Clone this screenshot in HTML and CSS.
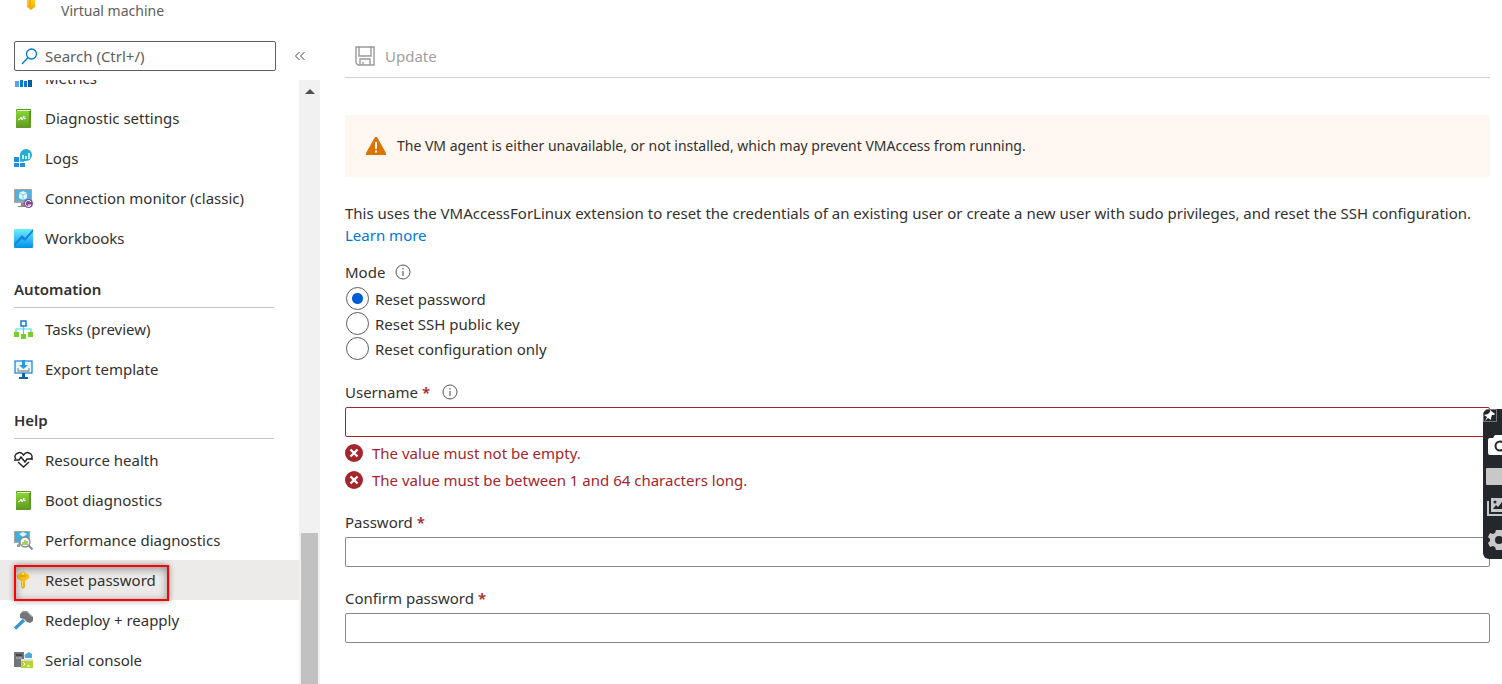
FILE: index.html
```
<!DOCTYPE html>
<html lang="en">
<head>
  <meta charset="UTF-8" />
  <meta name="viewport" content="width=device-width, initial-scale=1.0"/>
  <title>Reset password</title>
  <link rel="stylesheet" href="styles.css">
</head>
<body>

  <!-- Shared gradients and repeated icons -->
  <svg class="defs" width="0" height="0" aria-hidden="true">
    <defs>
      <linearGradient id="green" x1="0" y1="0" x2="0" y2="1"><stop offset="0" stop-color="#86d633"/><stop offset="1" stop-color="#5e9624"/></linearGradient>
      <linearGradient id="sky" x1="0" y1="0" x2="0" y2="1"><stop offset="0" stop-color="#6df0ff"/><stop offset="1" stop-color="#0091ea"/></linearGradient>
      <linearGradient id="gold" x1="0" y1="0" x2="0" y2="1"><stop offset="0" stop-color="#ffcf20"/><stop offset="1" stop-color="#f5a70c"/></linearGradient>
      <symbol id="book" viewBox="0 0 19 19">
        <rect x="2" y="0" width="15" height="19" rx="1" fill="#5e9624"/>
        <rect x="3" y="1" width="13" height="1" fill="#e4f5d0"/>
        <rect x="2" y="2" width="13" height="17" rx="1" fill="url(#green)"/>
        <path d="M4 11l2-1 1-2 1 3 2-4 0 3 2-1" fill="none" stroke="#fff" stroke-width="1"/>
      </symbol>
      <symbol id="key" viewBox="0 0 19 19">
        <path d="M9 0l6 4v3l-4 3v6l-2 2-2-2v-6L3 7V4z" fill="url(#gold)"/>
        <path d="M6 5h6" stroke="#e69500"/><circle cx="9" cy="2.500" r="1" fill="#fff"/>
        <path d="M8.500 10v6" stroke="#ffe067"/>
      </symbol>
      <symbol id="info" viewBox="0 0 16 16">
        <circle cx="8" cy="8" r="7" fill="none" stroke="#555"/>
        <path d="M8 7v5M8 4v1.500" stroke="#444"/>
      </symbol>
      <symbol id="error" viewBox="0 0 18 18">
        <circle cx="9" cy="9" r="9" fill="#a4262c"/>
        <path d="M5.500 5.500l7 7M12.500 5.500l-7 7" stroke="#fff" stroke-width="2.400"/>
      </symbol>
    </defs>
  </svg>

  <div class="page">
    <aside class="sidebar">
      <div class="resource">
        <svg class="icon" viewBox="0 0 19 19"><path d="M5 0h8v7l-4 3-4-3z" fill="url(#gold)"/><path d="M8 0v7" stroke="#e69500"/></svg>
        <span>Virtual machine</span>
      </div>

      <div class="search-row">
        <label class="search">
          <svg width="17" height="17" viewBox="0 0 17 17" fill="none" stroke="#0078d4" stroke-width="1.300"><circle cx="10.500" cy="6" r="5"/><path d="M7 9.500L1 16"/></svg>
          <input type="text" placeholder="Search (Ctrl+/)" aria-label="Search">
        </label>
        <button class="collapse" type="button" aria-label="Collapse menu">
          <svg width="12" height="12" viewBox="0 0 12 12" fill="none" stroke="#444"><path d="M5.500 2L1.500 6l4 4M10.500 2L6.500 6l4 4"/></svg>
        </button>
      </div>

      <div class="menu-area">
        <nav class="menu">
          <a href="#">
            <svg class="icon" viewBox="0 0 19 19"><path d="M1 12h4v6H1z" fill="#5ea0ef"/><path d="M6 8h3v10H6z" fill="#0078d4"/><path d="M10 12h3v6h-3z" fill="#0078d4"/><path d="M14 6h4v12h-4z" fill="#005ba1"/></svg>
            Metrics
          </a>
          <a href="#"><svg class="icon"><use href="#book"/></svg>Diagnostic settings</a>
          <a href="#">
            <svg class="icon" viewBox="0 0 19 19"><path d="M0 8h5v5H0zM0 14h5v4H0zM6 14h5v4H6z" fill="#258ddd"/><path d="M6 8h4v5H6z" fill="#57b8ef"/><path d="M6 12V6a6 6 0 1 1 6 6z" fill="#23aed0"/><path d="M9 6v4M12 7v3M15 4v6" stroke="#fff" stroke-width="1.500"/></svg>
            Logs
          </a>
          <a href="#">
            <svg class="icon" viewBox="0 0 19 19"><rect width="18" height="14" rx="1" fill="#a3a5a7"/><rect x="1" y="1" width="16" height="11" fill="#55b1d9"/><path d="M9 2l4 2v5l-4 2-4-2V4z" fill="#e4f6ff"/><path d="M5 4l4 2 4-2M9 6v5" stroke="#7ccbed" fill="none"/><path d="M7 14h4v3h3v1H4v-1h3z" fill="#888"/><circle cx="14.500" cy="14.500" r="4.500" fill="#804998"/><path d="M17 13a3 3 0 1 0 0 3h-3" stroke="#fff" fill="none"/></svg>
            Connection monitor (classic)
          </a>
          <a href="#">
            <svg class="icon" viewBox="0 0 19 19"><rect width="19" height="19" rx="1" fill="url(#sky)"/><path d="M0 15l8-9 3 3 8-9v3l-8 9-3-2-8 7z" fill="#1683e0"/></svg>
            Workbooks
          </a>

          <h2>Automation</h2>
          <a href="#">
            <svg class="icon" viewBox="0 0 19 19"><path d="M9.500 5v9M2 13V9h15v4" fill="none" stroke="#47d4ee" stroke-width="1.200"/><rect x="7" y="1" width="5" height="5" fill="#fff" stroke="#177bca" stroke-width="1.500"/><path d="M0 12h5v5H0zM7 14h5v5H7zM14 12h5v5h-5z" fill="#7acb28"/></svg>
            Tasks (preview)
          </a>
          <a href="#">
            <svg class="icon" viewBox="0 0 19 19"><rect x="1" y="1" width="17" height="12" fill="#e9f7ff" stroke="#2786d0" stroke-width="1.300"/><path d="M8 0h3v5h3L9.500 9 5 5h3z" fill="#289bdc"/><path d="M4 8v3h11V8" fill="none" stroke="#999" stroke-width="1.300"/><path d="M8 13h3v4h3v2H5v-2h3z" fill="#1261a6"/></svg>
            Export template
          </a>

          <h2>Help</h2>
          <a href="#">
            <svg class="icon" viewBox="0 0 19 19" fill="none" stroke="#222" stroke-width="1.400"><path d="M2 8C0 6 1 3 4 2c2-1 4 0 5.500 2C11 2 13 1 15 2c3 1 4 4 2 6M4 11l5.500 5L15 11"/><path d="M0 9h5l2-3 4 5 2-3h6"/></svg>
            Resource health
          </a>
          <a href="#"><svg class="icon"><use href="#book"/></svg>Boot diagnostics</a>
          <a href="#">
            <svg class="icon" viewBox="0 0 19 19"><rect width="16" height="12" fill="#a3a5a7"/><rect x="1" y="1" width="14" height="10" fill="#43add9"/><path d="M5 3l4-2 4 2-4 3z" fill="#e4f6ff"/><path d="M3 14l3-3v5H3z" fill="#999"/><path d="M14.500 14.500l4 4" stroke="#888" stroke-width="2"/><circle cx="11" cy="11" r="5" fill="#fff" stroke="#888" stroke-width="1.300"/><path d="M9 11v3M11 9v5M13 10v4" stroke="#6fba1b" stroke-width="1.300"/></svg>
            Performance diagnostics
          </a>
          <a href="#" class="active" aria-current="page"><svg class="icon"><use href="#key"/></svg>Reset password</a>
          <a href="#">
            <svg class="icon" viewBox="0 0 19 19"><path d="M1 17.500L10 9" stroke="#3797ce" stroke-width="3.200"/><path d="M6 3l3-3h4l6 6v4l-3 2-3-1-3-3-4-1z" fill="#737679"/><path d="M9 1h4l5 5" fill="none" stroke="#a0a2a4"/></svg>
            Redeploy + reapply
          </a>
          <a href="#">
            <svg class="icon" viewBox="0 0 19 19"><path d="M0 1h10v15H0z" fill="#737679"/><path d="M2 3h6v2H2z" fill="#444"/><path d="M2 7h6" stroke="#bbb"/><path d="M11 6a2 2 0 0 1 1-3l3-2 3 2v4h-7z" fill="#48add9"/><path d="M8 4l2 3" stroke="#804998"/><rect x="7" y="8" width="12" height="9" fill="#b8d432"/><path d="M7 8h12v2H7z" fill="#ddd"/><path d="M9 11l2 2-2 2M13 15h3" stroke="#fff" fill="none"/></svg>
            Serial console
          </a>
        </nav>
        <div class="scrollbar" aria-hidden="true">
          <div class="arrow"></div>
          <div class="thumb"></div>
        </div>
      </div>
    </aside>

    <main class="content">
      <div class="toolbar">
        <button type="button" disabled>
          <svg width="20" height="20" viewBox="0 0 20 20" fill="none" stroke="#999" stroke-width="1.400"><path d="M1 1h18v18H3l-2-2zM4 1v9h12V1M5 19v-6h10v6M8 19v-3"/></svg>
          Update
        </button>
      </div>

      <div class="banner">
        <svg width="20" height="18" viewBox="0 0 20 18"><path d="M9 0h2l9 16v2H0v-2z" fill="#db7500"/><path d="M10 5v7M10 13.500v2" stroke="#fff" stroke-width="2"/></svg>
        <span>The VM agent is either unavailable, or not installed, which may prevent VMAccess from running.</span>
      </div>

      <form>
        <p class="intro">This uses the VMAccessForLinux extension to reset the credentials of an existing user or create a new user with sudo privileges, and reset the SSH configuration. <a href="#">Learn more</a></p>

        <fieldset class="mode">
          <legend>Mode <svg class="info"><use href="#info"/></svg></legend>
          <label><input type="radio" name="mode" checked>Reset password</label>
          <label><input type="radio" name="mode">Reset SSH public key</label>
          <label><input type="radio" name="mode">Reset configuration only</label>
        </fieldset>

        <div class="form-group">
          <label for="username">Username <span class="required">*</span><svg class="info"><use href="#info"/></svg></label>
          <input type="text" id="username" class="invalid">
          <div class="error"><svg><use href="#error"/></svg>The value must not be empty.</div>
          <div class="error"><svg><use href="#error"/></svg>The value must be between 1 and 64 characters long.</div>
        </div>

        <div class="form-group">
          <label for="password">Password <span class="required">*</span></label>
          <input type="password" id="password">
        </div>

        <div class="form-group">
          <label for="confirm">Confirm password <span class="required">*</span></label>
          <input type="password" id="confirm">
        </div>
      </form>
    </main>
  </div>

  <!-- Capture tool docked to the right edge -->
  <div class="dock">
    <button type="button" class="pin" aria-label="Pin"><svg width="14" height="13" viewBox="0 0 14 13"><rect x=".5" y=".5" width="13" height="12" fill="none" stroke="#777"/><path d="M7 1l5 4-1 1-2 0-1 3 0 2-3-2-3 3 2-4-3-2 4-1 2-2z" fill="#fff"/></svg></button>
    <button type="button" aria-label="Camera"><svg width="14" height="20" viewBox="0 0 14 20"><path d="M0 5q0-2 2-2h3l2-3h7v20H2q-2 0-2-2z" fill="#fff"/><circle cx="12" cy="11" r="4.500" fill="none" stroke="#24272c" stroke-width="2"/></svg></button>
    <button type="button" aria-label="Video"><svg width="16" height="17" viewBox="0 0 16 17"><rect width="20" height="17" rx="1" fill="#c8c8c8"/></svg></button>
    <button type="button" aria-label="Gallery"><svg width="15" height="19" viewBox="0 0 15 19"><path d="M1 4v14h14" fill="none" stroke="#c8c8c8" stroke-width="2"/><path d="M4 1h11v14H4z" fill="#c8c8c8"/><circle cx="8" cy="5" r="1.500" fill="#24272c"/><path d="M6 12l3-4 2 2 4-5v7z" fill="#24272c"/></svg></button>
    <button type="button" aria-label="Settings"><svg width="14" height="22" viewBox="0 0 14 22"><path d="M8 1h6v20H8l-1-3-2-1-3 1-2-4 2-2v-2L0 8l2-4 3 1 2-1z" fill="#c8c8c8"/><circle cx="11" cy="11" r="4" fill="#24272c"/></svg></button>
  </div>

</body>
</html>
```
FILE: styles.css
```
*,
*::after {
  box-sizing: border-box;
}

body {
  margin: 0;
  font-family: "Noto Sans", "Open Sans", sans-serif;
  font-size: 15px;
  line-height: 22px;
  color: #323130;
  background: #fff;
}

button,
input {
  font: inherit;
}

button {
  border: none;
  padding: 0;
  background: none;
}

a {
  color: #0078d4;
  text-decoration: none;
}

.defs {
  position: absolute;
}

.page {
  display: flex;
  height: 100vh;
  overflow: hidden;
}

/* Sidebar */
.sidebar {
  display: flex;
  flex-direction: column;
  flex: 0 0 320px;
}

.resource {
  display: flex;
  gap: 20px;
  padding-left: 22px;
  height: 41px;
  font-size: 14px;
  color: #605e5c;
}

.search-row {
  display: flex;
  align-items: center;
  gap: 18px;
  padding-left: 14px;
  margin-bottom: 9px;
}

.search {
  display: flex;
  align-items: center;
  gap: 7px;
  width: 262px;
  height: 30px;
  padding-left: 6px;
  border: 1px solid #605e5c;
  border-radius: 2px;
}

.search input {
  flex: 1;
  min-width: 0;
  padding: 0;
  border: none;
  outline: none;
}

.search input::placeholder {
  color: #605e5c;
}

.collapse {
  display: flex;
}

.menu-area {
  display: flex;
  flex: 1;
  min-height: 0;
}

/* list is scrolled to its end */
.menu {
  display: flex;
  flex-direction: column;
  justify-content: flex-end;
  flex: 1;
  padding-bottom: 4px;
  overflow: hidden;
}

.menu a {
  display: flex;
  align-items: center;
  flex: 0 0 40px;
  gap: 12px;
  padding-left: 14px;
  color: #323130;
}

.icon {
  width: 19px;
  height: 19px;
}

.menu h2 {
  flex: 0 0 50px;
  margin: 0 25px 1px 14px;
  padding-top: 20px;
  border-bottom: 1px solid #c8c6c4;
  font-size: 15px;
  font-weight: 600;
}

.menu .active {
  position: relative;
  background: #edebe9;
}

/* red highlight frame */
.menu .active::after {
  content: "";
  position: absolute;
  left: 14px;
  top: 5px;
  width: 155px;
  height: 36px;
  border: 2px solid #f00;
  box-shadow: 0 0 6px rgba(0,0,0,0.4), inset 0 2px 8px rgba(0,0,0,0.4);
  z-index: 1;
}

.scrollbar {
  display: flex;
  flex-direction: column;
  justify-content: space-between;
  align-items: center;
  width: 21px;
  background: #f1f1f1;
}

.arrow {
  margin-top: 9px;
  border: 5px solid transparent;
  border-top: none;
  border-bottom-color: #505050;
}

.thumb {
  width: 17px;
  height: 25%;
  background: #c1c1c1;
}

/* Content */
.content {
  flex: 1;
  min-width: 0;
  padding: 34px 12px 0 25px;
}

.toolbar {
  height: 44px;
  padding-left: 10px;
  border-bottom: 1px solid #d2d0ce;
}

.toolbar button {
  display: flex;
  align-items: center;
  gap: 10px;
  height: 43px;
  color: #a19f9d;
}

.banner {
  display: flex;
  align-items: center;
  gap: 11px;
  min-height: 62px;
  margin: 37px 0 25px;
  padding: 0 21px;
  border-radius: 2px;
  background: #fff7f0;
  font-size: 14px;
}

.intro {
  margin: 0 0 15px;
}

.mode {
  margin: 0 0 20px;
  padding: 0;
  border: none;
}

.mode legend {
  display: flex;
  align-items: center;
  gap: 10px;
  padding: 0;
  margin-bottom: 3px;
}

.info {
  width: 16px;
  height: 16px;
}

.mode label {
  display: flex;
  align-items: center;
  gap: 6px;
  height: 25px;
}

.mode input {
  appearance: none;
  width: 23px;
  height: 23px;
  margin: 0 0 0 1px;
  border: 1px solid #605e5c;
  border-radius: 50%;
}

.mode input:checked {
  background: radial-gradient(circle, #015cda 5px, #fff 6px);
}

.form-group {
  margin-bottom: 20px;
}

.form-group label {
  display: flex;
  align-items: center;
  gap: 4px;
  margin-bottom: 4px;
}

.form-group .info {
  margin-left: 8px;
}

.required {
  color: #a4262c;
  font-weight: 600;
}

.form-group input {
  display: block;
  width: 100%;
  height: 30px;
  padding: 0 8px;
  border: 1px solid #8a8886;
  border-radius: 2px;
}

.form-group .invalid {
  border-color: #a4262c;
}

.error {
  display: flex;
  align-items: center;
  gap: 9px;
  margin-top: 5px;
  color: #a4262c;
}

.error svg {
  width: 18px;
  height: 18px;
}

/* Docked tool */
.dock {
  position: fixed;
  right: 0;
  top: 409px;
  display: flex;
  flex-direction: column;
  justify-content: space-between;
  align-items: flex-end;
  width: 19px;
  height: 150px;
  padding-bottom: 8px;
  border-radius: 6px 0 0 6px;
  background: #24272c;
  overflow: hidden;
}

.dock button {
  display: flex;
}

.dock .pin {
  align-self: flex-start;
}
```
